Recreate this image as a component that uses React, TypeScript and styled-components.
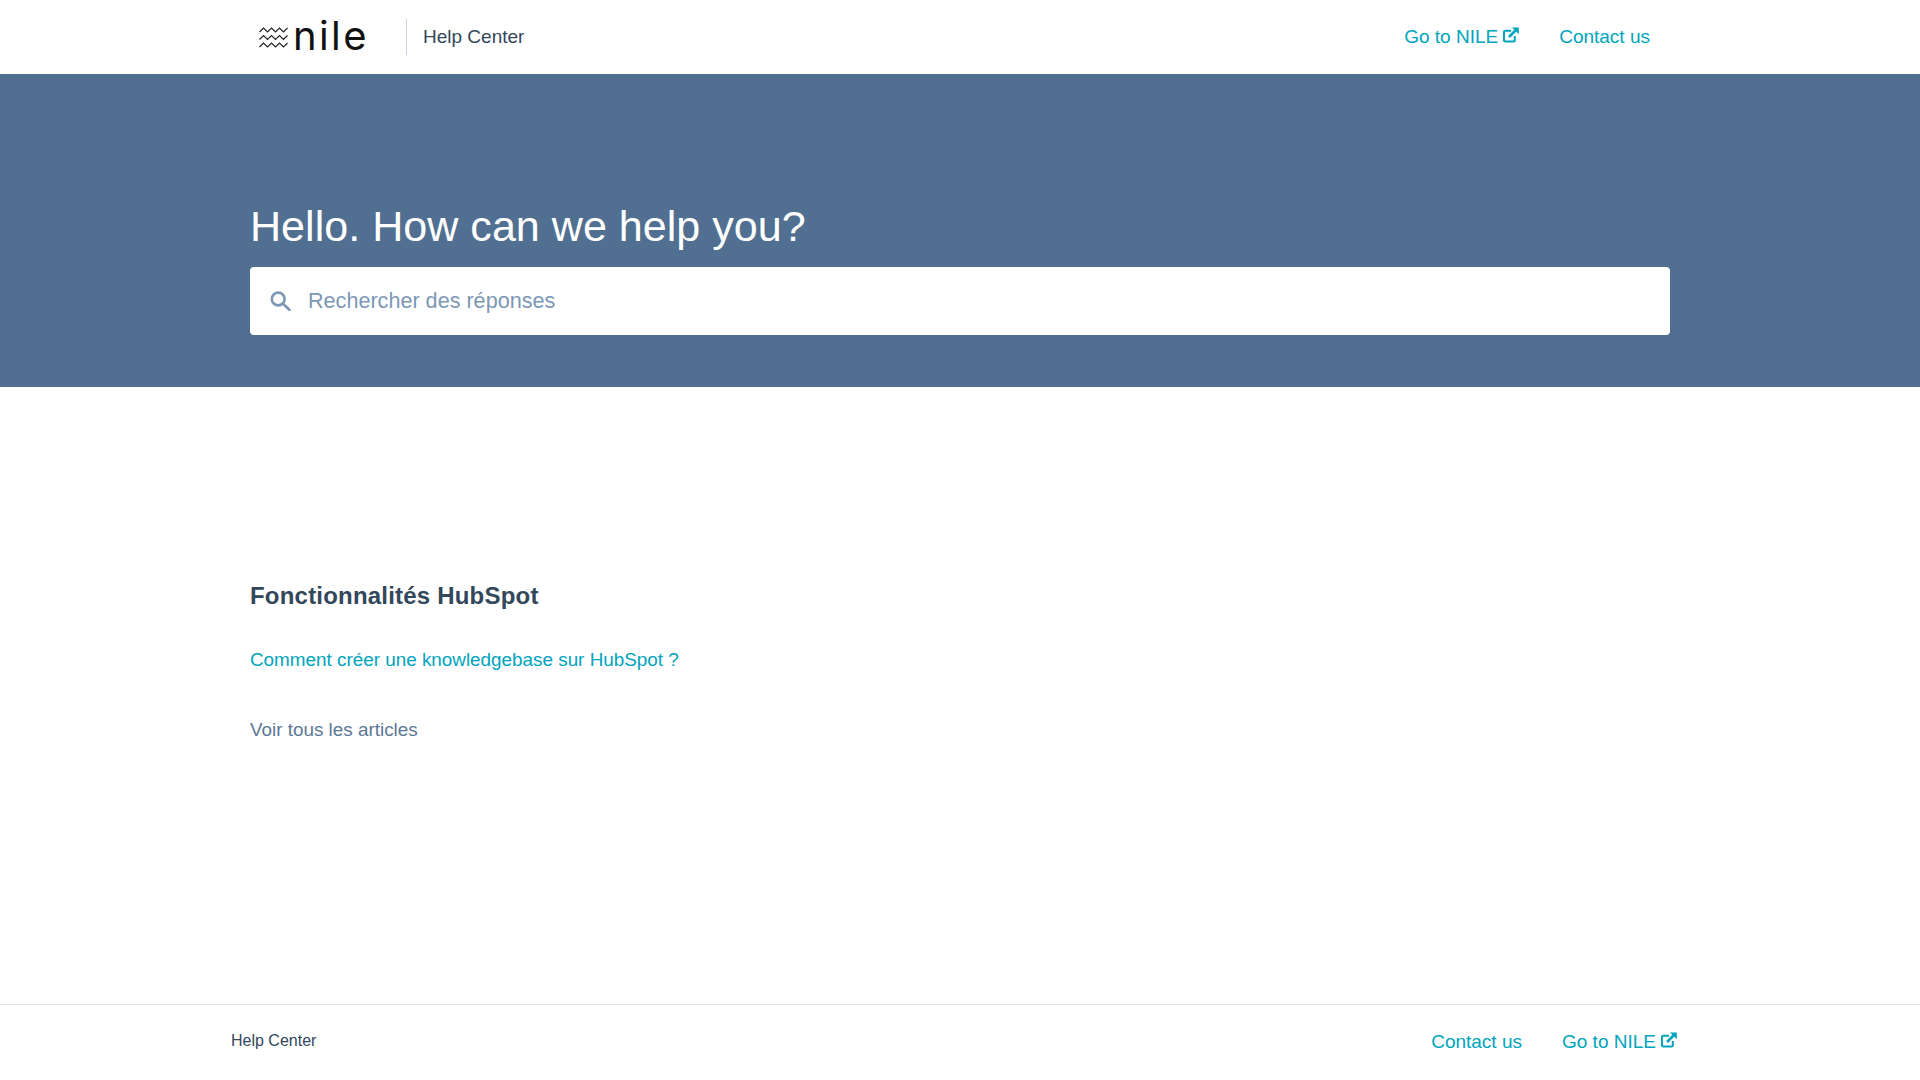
import React from 'react';
import styled, { createGlobalStyle } from 'styled-components';

const GlobalStyle = createGlobalStyle`
  html, body {
    margin: 0;
    padding: 0;
    background: #fff;
    font-family: "Liberation Sans", Arial, sans-serif;
    color: #33475b;
  }
  * { box-sizing: border-box; }
`;

const Page = styled.div`
  min-height: 1080px;
  display: flex;
  flex-direction: column;
`;

const Header = styled.header`
  height: 74px;
  display: flex;
  justify-content: center;
  background: #fff;
`;

const HeaderInner = styled.div`
  width: 1420px;
  display: flex;
  align-items: center;
  justify-content: space-between;
  padding: 0 20px 0 9px;
`;

const Brand = styled.div`
  display: flex;
  align-items: center;
`;

const Logo = styled.div`
  width: 119px;
  display: flex;
  align-items: center;
  gap: 5px;
`;

const LogoText = styled.span`
  font-family: Inter, sans-serif;
  font-size: 40px;
  font-weight: 400;
  line-height: 40px;
  letter-spacing: 2.4px;
  color: #111;
  margin-top: -2px;
`;

const BrandDivider = styled.div`
  width: 1px;
  height: 36px;
  margin: 0 16px 0 28px;
  background: #cbd6e2;
`;

const BrandTitle = styled.span`
  font-size: 19px;
  color: #33475b;
`;

const NavLinks = styled.nav`
  display: flex;
  align-items: center;
  gap: 40px;
`;

const NavLink = styled.a`
  display: inline-flex;
  align-items: center;
  gap: 5px;
  font-size: 19px;
  color: #00a4bd;
  text-decoration: none;
  cursor: pointer;
`;

const Hero = styled.section`
  height: 313px;
  padding-top: 124px;
  display: flex;
  justify-content: center;
  background: #516f90;
`;

const HeroInner = styled.div`
  width: 1420px;
`;

const HeroTitle = styled.h1`
  margin: 0 0 13px;
  font-size: 43.1px;
  line-height: 56px;
  font-weight: 400;
  color: #fff;
`;

const SearchBox = styled.div`
  height: 68px;
  display: flex;
  align-items: center;
  gap: 16px;
  padding-left: 20px;
  background: #fff;
  border-radius: 4px;
`;

const SearchInput = styled.input`
  flex: 1;
  border: none;
  outline: none;
  padding: 0 0 0 1px;
  background: transparent;
  font-family: inherit;
  font-size: 21.6px;
  color: #33475b;

  &::placeholder {
    color: #7c98b6;
    opacity: 1;
  }
`;

const Main = styled.main`
  flex: 1;
  display: flex;
  justify-content: center;
  padding-top: 191px;
`;

const Content = styled.div`
  width: 1420px;
`;

const SectionTitle = styled.h2`
  margin: 0 0 35px;
  font-size: 24px;
  line-height: 36px;
  font-weight: 700;
  letter-spacing: 0.2px;
  color: #33475b;
`;

const ArticleLink = styled.a`
  display: block;
  margin-bottom: 48px;
  font-size: 18.87px;
  line-height: 22px;
  color: #00a4bd;
  text-decoration: none;
  cursor: pointer;
`;

const AllLink = styled.a`
  display: block;
  font-size: 18.87px;
  line-height: 22px;
  color: #5c7896;
  text-decoration: none;
  cursor: pointer;
`;

const Footer = styled.footer`
  height: 76px;
  display: flex;
  justify-content: center;
  border-top: 1px solid #e5e5e5;
`;

const FooterInner = styled.div`
  width: 1458px;
  display: flex;
  align-items: center;
  justify-content: space-between;
  padding: 0 12px 1px 0;
`;

const FooterLabel = styled.span`
  font-size: 16px;
  color: #33475b;
  margin-top: -2px;
`;

const WavesLogo = () => (
  <svg width="29" height="24" viewBox="0 0 29 24" fill="none" stroke="#222" strokeWidth="1.2">
    <path d="M0.5 7 L4.5 3 L8.5 7 L12.5 3 L16.5 7 L20.5 3 L24.5 7 L28.5 3" />
    <path d="M0.5 14.5 L4.5 10.5 L8.5 14.5 L12.5 10.5 L16.5 14.5 L20.5 10.5 L24.5 14.5 L28.5 10.5" />
    <path d="M0.5 22 L4.5 18 L8.5 22 L12.5 18 L16.5 22 L20.5 18 L24.5 22 L28.5 18" />
  </svg>
);

const ExternalIcon = () => (
  <svg width="16" height="16" viewBox="0 0 16 16" fill="none" stroke="#00a4bd" style={{ marginTop: -4 }}>
    <path d="M8 3.7 H2.2 A1.2 1.2 0 0 0 1 4.9 V13.3 A1.2 1.2 0 0 0 2.2 14.5 H10.6 A1.2 1.2 0 0 0 11.8 13.3 V9" strokeWidth="2" />
    <path d="M6 10 L12.5 3.5" strokeWidth="2.6" />
    <path d="M9 0.5 H15.8 V7.3 Z" fill="#00a4bd" stroke="none" />
  </svg>
);

const SearchIcon = () => (
  <svg width="21" height="20" viewBox="0 0 21 20" fill="none" stroke="#7c98b6" strokeWidth="2.6">
    <circle cx="8.2" cy="8" r="6.4" />
    <path d="M13 12.8 L19.4 18.8" strokeLinecap="round" />
  </svg>
);

const App: React.FC = () => {
  return (
    <Page>
      <GlobalStyle />
      <Header>
        <HeaderInner>
          <Brand>
            <Logo>
              <WavesLogo />
              <LogoText>nile</LogoText>
            </Logo>
            <BrandDivider />
            <BrandTitle>Help Center</BrandTitle>
          </Brand>
          <NavLinks>
            <NavLink>Go to NILE <ExternalIcon /></NavLink>
            <NavLink>Contact us</NavLink>
          </NavLinks>
        </HeaderInner>
      </Header>

      <Hero>
        <HeroInner>
          <HeroTitle>Hello. How can we help you?</HeroTitle>
          <SearchBox>
            <SearchIcon />
            <SearchInput placeholder="Rechercher des réponses" />
          </SearchBox>
        </HeroInner>
      </Hero>

      <Main>
        <Content>
          <SectionTitle>Fonctionnalités HubSpot</SectionTitle>
          <ArticleLink>Comment créer une knowledgebase sur HubSpot ?</ArticleLink>
          <AllLink>Voir tous les articles</AllLink>
        </Content>
      </Main>

      <Footer>
        <FooterInner>
          <FooterLabel>Help Center</FooterLabel>
          <NavLinks>
            <NavLink>Contact us</NavLink>
            <NavLink>Go to NILE <ExternalIcon /></NavLink>
          </NavLinks>
        </FooterInner>
      </Footer>
    </Page>
  );
};

export default App;
